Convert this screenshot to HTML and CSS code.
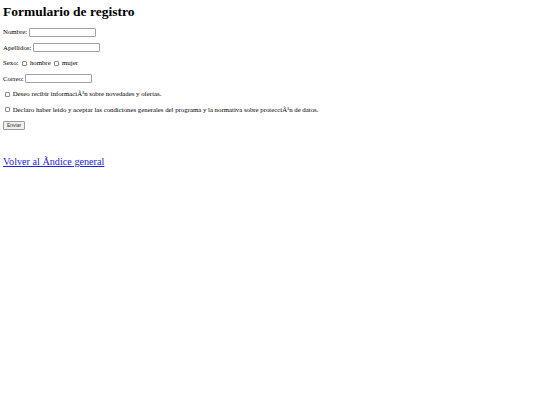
FILE: index.html
```html
<!DOCTYPE html>
<html lang="es">
<head>
<meta charset="UTF-8">
<title>Formulario de registro</title>
<link rel="stylesheet" href="styles.css">
</head>
<body>
  <h1>Formulario de registro</h1>
  <form action="#" method="POST">
    <p>Nombre: <input type="text" name="nombre"></p>
    <p>Apellidos: <input type="text" name="apellidos"></p>
    <p>Sexo: <input type="checkbox" name="hombre"> hombre <input type="checkbox" name="mujer"> mujer</p>
    <p>Correo: <input type="text" name="correo"></p>
    <p><input type="checkbox" name="info"> Deseo recibir informaciÃ³n sobre novedades y ofertas.</p>
    <p><input type="checkbox" name="acepto"> Declaro haber leido y aceptar las condiciones generales del programa y la normativa sobre protecciÃ³n de datos.</p>
    <p><input type="submit" value="Enviar" class="btn"></p>
  </form>
  <p class="back-row"><a href="#" class="back">Volver al Ã­ndice general</a></p>
</body>
</html>
```

FILE: styles.css
```css
body {
  font-family: "Liberation Serif", serif;
  font-size: 6.8px;
  color: #000;
  margin: 4px 3px;
}
h1 {
  font-size: 13.5px;
  line-height: 15px;
  margin: 0 0 8px 0;
}
p {
  line-height: 10px;
  margin: 5.5px 0;
}
input[type="text"] {
  box-sizing: border-box;
  width: 67px;
  height: 9px;
  padding: 0 2px;
  font-size: 6px;
  border: 1px solid #a0a0a0;
  border-radius: 1px;
  vertical-align: middle;
}
input[type="checkbox"] {
  -webkit-appearance: none;
  appearance: none;
  box-sizing: border-box;
  width: 5px;
  height: 5px;
  margin: 0 1px 0 2px;
  border: 1px solid #8a8a8a;
  border-radius: 1px;
  background: #fff;
  vertical-align: middle;
}
.btn {
  box-sizing: border-box;
  height: 9px;
  font-family: "Liberation Sans", sans-serif;
  font-size: 5px;
  line-height: 5px;
  color: #333;
  padding: 0 3px;
  margin: 0;
  border: 1px solid #9a9a9a;
  border-radius: 1px;
  background-color: #efefef;
  vertical-align: middle;
}
.back-row {
  margin-top: 26px;
  line-height: 12px;
}
.back {
  font-size: 10.2px;
  color: #2222ee;
}
```
